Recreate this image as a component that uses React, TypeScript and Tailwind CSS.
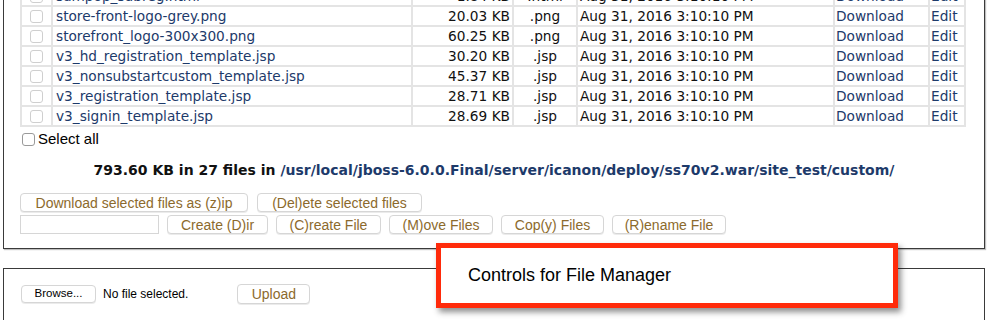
import React from "react";

type FileRow = { name: string; size: string; ext: string };

const files: FileRow[] = [
  { name: "sampop_subreg.html", size: "1.84 KB", ext: ".html" },
  { name: "store-front-logo-grey.png", size: "20.03 KB", ext: ".png" },
  { name: "storefront_logo-300x300.png", size: "60.25 KB", ext: ".png" },
  { name: "v3_hd_registration_template.jsp", size: "30.20 KB", ext: ".jsp" },
  { name: "v3_nonsubstartcustom_template.jsp", size: "45.37 KB", ext: ".jsp" },
  { name: "v3_registration_template.jsp", size: "28.71 KB", ext: ".jsp" },
  { name: "v3_signin_template.jsp", size: "28.69 KB", ext: ".jsp" },
];

const verdana = "font-['DejaVu_Sans',Verdana,sans-serif]";
const helv = "font-['Liberation_Sans',Arial,sans-serif]";

function Box({ dark }: { dark?: boolean }) {
  return (
    <span
      className={`inline-block h-[13px] w-[13px] shrink-0 rounded-[3px] border bg-white ${
        dark ? "border-[#9a9a9a]" : "border-[#cfcfcf]"
      }`}
    />
  );
}

function Btn({ label, w }: { label: string; w: string }) {
  return (
    <button
      className={`${w} flex h-[19px] items-center justify-center rounded-[4px] border border-[#d6d6d6] bg-white text-[14px] leading-none text-[#8c6a2c] shadow-[0_1px_0_rgba(0,0,0,0.08)] ${helv}`}
    >
      {label}
    </button>
  );
}

const cell = "border-l-2 border-[#e4e4e4] flex items-center overflow-hidden whitespace-nowrap";

export default function App() {
  return (
    <div className="relative h-[320px] w-[988px] overflow-hidden bg-white">
      {/* file listing panel */}
      <div className="mx-[3px] -mt-[13px] border border-t-0 border-[#3a3a3a] pl-[16px] pr-[16px] pb-[14px] shadow-[1px_1px_1px_rgba(0,0,0,0.25)]">
        <div className={`w-[946px] border-r-2 border-[#e4e4e4] text-[13.7px] ${verdana}`}>
          {files.map((f) => (
            <div
              key={f.name}
              className="grid h-[20px] grid-cols-[31px_360px_101px_64px_257px_95px_37px] border-b-2 border-[#e4e4e4]"
            >
              <div className={`${cell} justify-center`}>
                <Box />
              </div>
              <div className={`${cell} pl-[3px] text-[#1d3a6a]`}>{f.name}</div>
              <div className={`${cell} justify-end pr-[2px] text-[#111]`}>{f.size}</div>
              <div className={`${cell} justify-center text-[#111]`}>{f.ext}</div>
              <div className={`${cell} pl-[2px] text-[#111]`}>Aug 31, 2016 3:10:10 PM</div>
              <div className={`${cell} pl-[1px] text-[#1d3a6a]`}>Download</div>
              <div className={`${cell} pl-[1px] text-[#1d3a6a]`}>Edit</div>
            </div>
          ))}
        </div>

        <div className={`mt-[3px] flex h-[18px] items-center gap-[3px] pl-[2px] text-[15px] leading-[18px] text-black ${helv}`}>
          <Box dark />
          <span>Select all</span>
        </div>

        <div className={`mt-[14px] text-center text-[14px] leading-[16px] font-bold text-[#111] ${verdana}`}>
          793.60 KB in 27 files in{" "}
          <span className="text-[#1d3a6a]">/usr/local/jboss-6.0.0.Final/server/icanon/deploy/ss70v2.war/site_test/custom/</span>
        </div>

        <div className="mt-[15px] flex gap-[9px]">
          <Btn label="Download selected files as (z)ip" w="w-[228px]" />
          <Btn label="(Del)ete selected files" w="w-[165px]" />
        </div>
        <div className="mt-[3px] flex gap-[8px]">
          <input className="h-[19px] w-[139px] border border-[#d6d6d6] bg-white" />
          <Btn label="Create (D)ir" w="w-[101px]" />
          <Btn label="(C)reate File" w="w-[105px]" />
          <Btn label="(M)ove Files" w="w-[104px]" />
          <Btn label="Cop(y) Files" w="w-[103px]" />
          <Btn label="(R)ename File" w="w-[114px]" />
        </div>
      </div>

      {/* upload panel */}
      <div className="mx-[3px] mt-[19px] h-[80px] border border-[#3a3a3a] pl-[17px] pt-[15px]">
        <div className={`flex items-center ${helv}`}>
          <button className="flex h-[18px] w-[75px] items-center justify-center rounded-[4px] border border-[#d6d6d6] bg-white text-[11.5px] text-black shadow-[0_1px_0_rgba(0,0,0,0.08)]">
            Browse...
          </button>
          <span className="ml-[7px] text-[12px] text-black">No file selected.</span>
          <button className="ml-[49px] flex h-[20px] w-[73px] items-center justify-center rounded-[4px] border border-[#d6d6d6] bg-white text-[14px] text-[#8c6a2c] shadow-[0_1px_0_rgba(0,0,0,0.08)]">
            Upload
          </button>
        </div>
      </div>

      {/* callout */}
      <div
        className={`absolute left-[436px] top-[243px] flex h-[65px] w-[462px] items-center border-[5px] border-[#ff2a0a] bg-white pl-[27px] text-[18px] text-black shadow-[3px_4px_6px_rgba(0,0,0,0.45)] ${helv}`}
      >
        Controls for File Manager
      </div>
    </div>
  );
}
